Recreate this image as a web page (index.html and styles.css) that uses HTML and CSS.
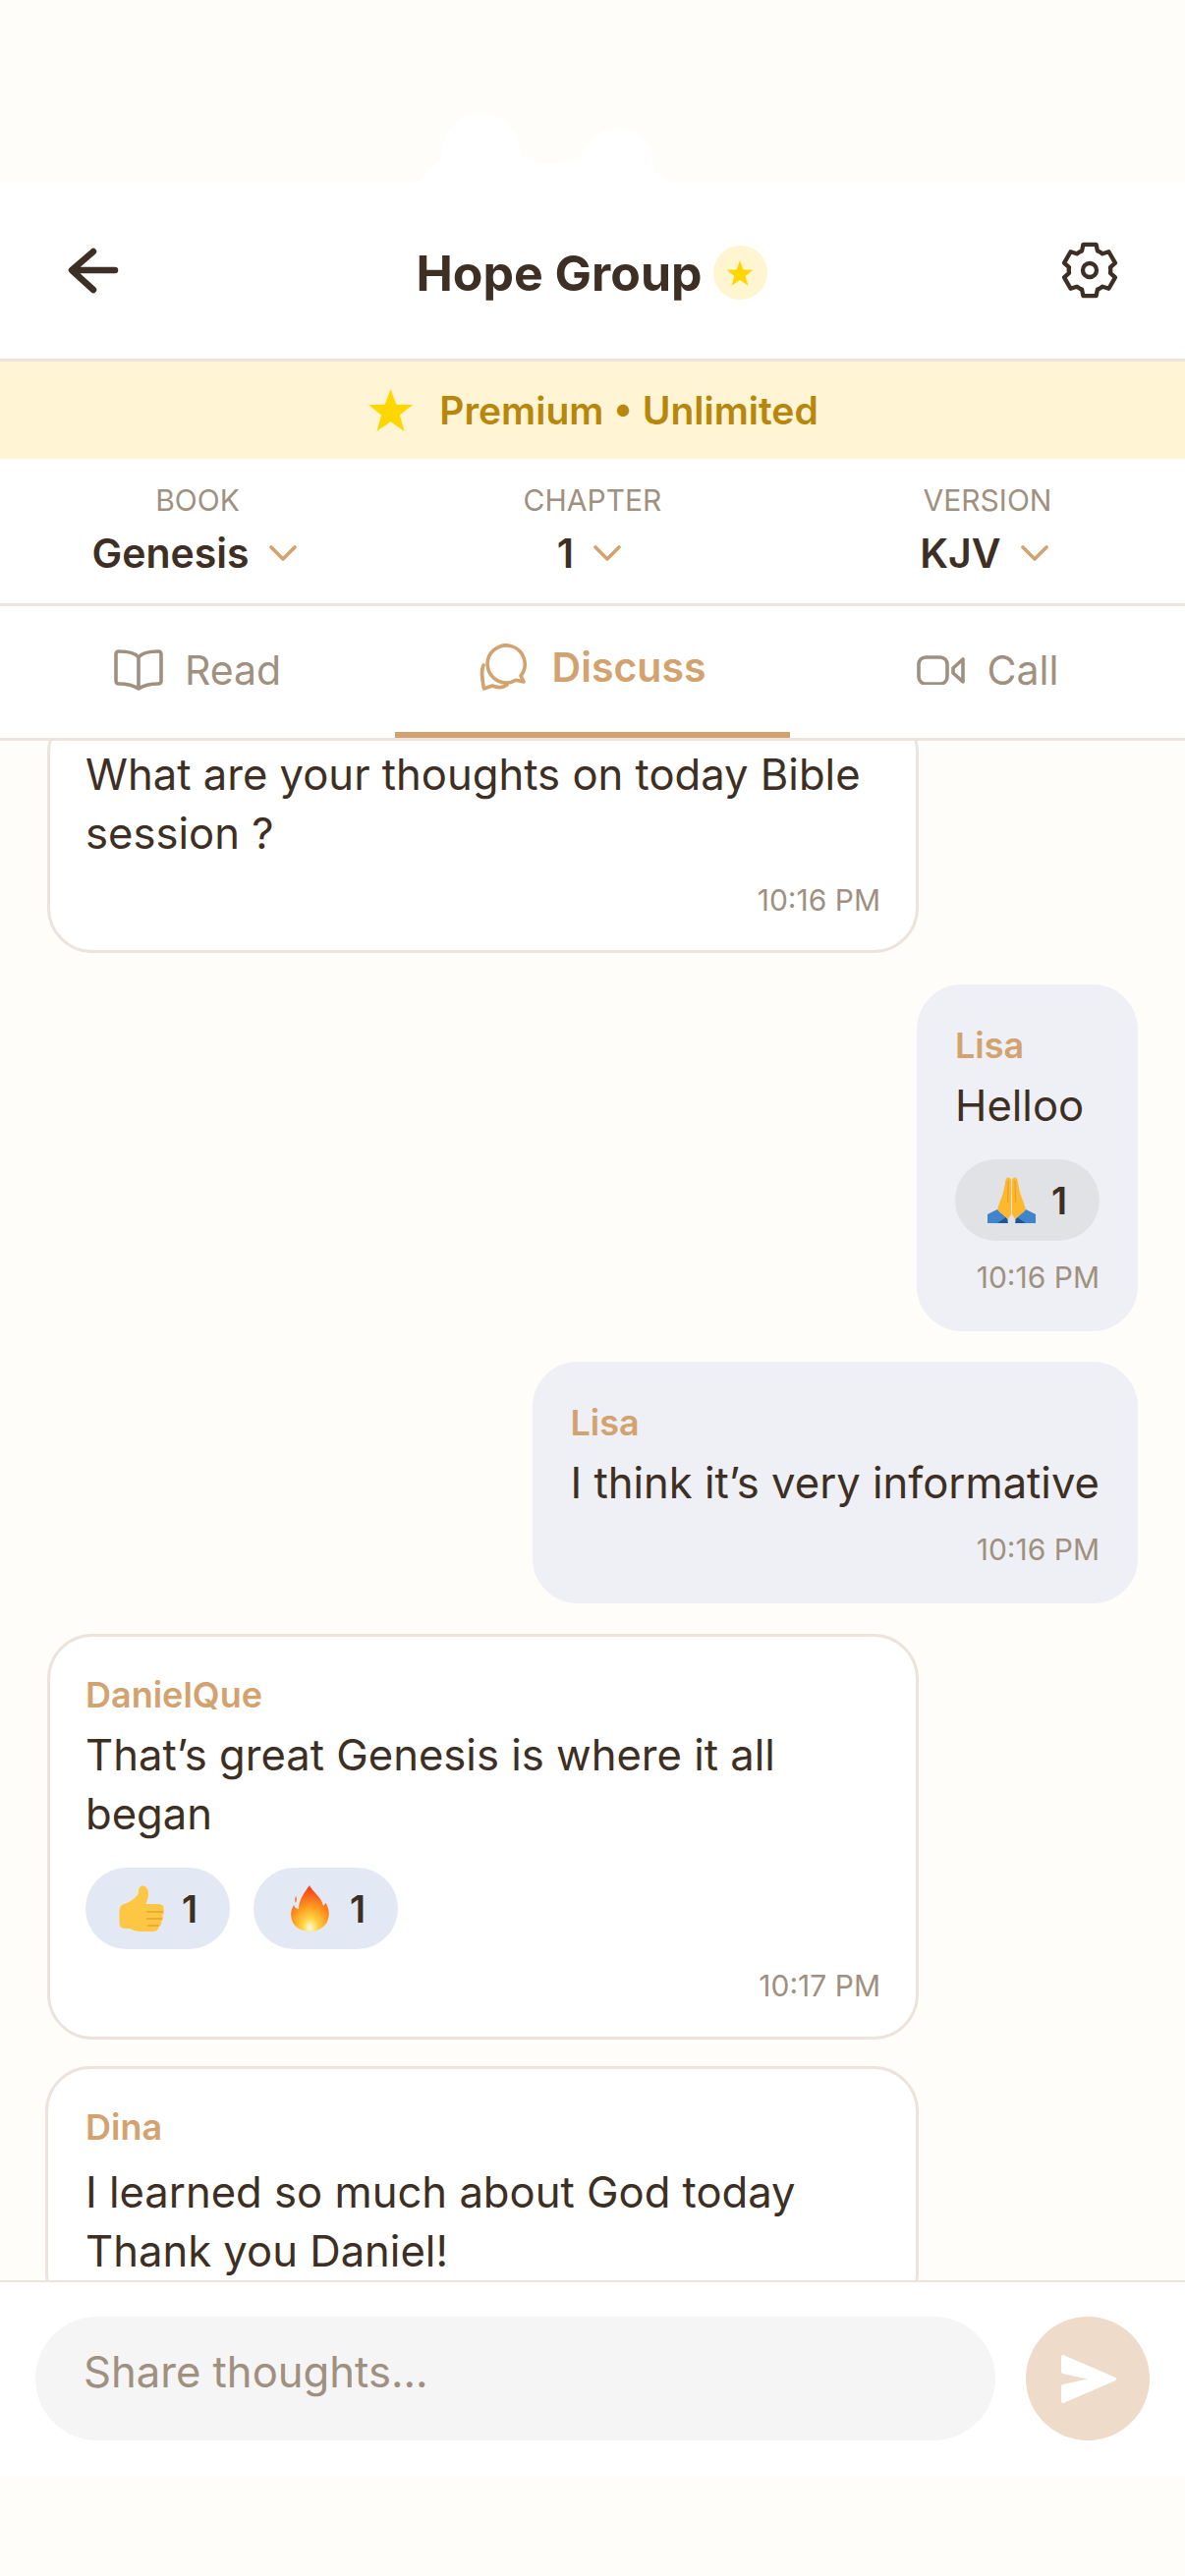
FILE: index.html
```html
<!DOCTYPE html>
<html lang="en">
<head>
    <meta charset="UTF-8">
    <meta name="viewport" content="width=device-width, initial-scale=1.0">
    <title>Hope Group</title>
    <link rel="stylesheet" href="styles.css">
</head>
<body>
<div class="app">

    <svg class="sky" viewBox="0 0 1206 186" aria-hidden="true">
        <path d="M427 186 Q440 166 450 163 C448 135 465 115 490 115 C514 115 530 135 530 158 Q540 161 548 167 Q575 166 590 161 C600 140 615 130 628 130 C652 130 666 150 665 175 Q672 178 682 186 Z" fill="#fff"/>
    </svg>

    <header class="header">
        <svg class="back-icon" viewBox="0 0 56 52">
            <path d="M27 7 L5 26 L27 46 M6 26 H49"/>
        </svg>
        <div class="title">
            <span>Hope Group</span>
            <span class="title-badge">
                <svg class="star-small" viewBox="0 0 24 24"><path d="M12 1 L15 9 L23.5 9.2 L16.8 14.5 L19.2 23 L12 18 L4.8 23 L7.2 14.5 L.5 9.2 L9 9 Z"/></svg>
            </span>
        </div>
        <svg class="gear-icon" viewBox="-31 -32 62 64">
            <path d="M-8.5 -21 L-7 -28 L7 -28 L8.5 -21 Q11.5 -20 13.94 -17.86 L20.75 -20.06 L27.75 -7.94 L22.44 -3.14 Q23 0 22.44 3.14 L27.75 7.94 L20.75 20.06 L13.94 17.86 Q11.5 20 8.5 21 L7 28 L-7 28 L-8.5 21 Q-11.5 20 -13.94 17.86 L-20.75 20.06 L-27.75 7.94 L-22.44 3.14 Q-23 0 -22.44 -3.14 L-27.75 -7.94 L-20.75 -20.06 L-13.94 -17.86 Q-11.5 -20 -8.5 -21 Z"/>
            <circle cx="0" cy="0" r="7.5"/>
        </svg>
    </header>

    <div class="premium-bar">
        <svg class="star-big" viewBox="0 0 24 24"><path d="M12 1 L15 9 L23.5 9.2 L16.8 14.5 L19.2 23 L12 18 L4.8 23 L7.2 14.5 L.5 9.2 L9 9 Z"/></svg>
        <span>Premium • Unlimited</span>
    </div>

    <div class="selectors">
        <div class="selector">
            <div class="selector-label">BOOK</div>
            <div class="selector-value">Genesis
                <svg class="chevron" viewBox="0 0 28 16"><path d="M2 2 L14 14 L26 2"/></svg>
            </div>
        </div>
        <div class="selector">
            <div class="selector-label">CHAPTER</div>
            <div class="selector-value">1
                <svg class="chevron" viewBox="0 0 28 16"><path d="M2 2 L14 14 L26 2"/></svg>
            </div>
        </div>
        <div class="selector">
            <div class="selector-label">VERSION</div>
            <div class="selector-value">KJV
                <svg class="chevron" viewBox="0 0 28 16"><path d="M2 2 L14 14 L26 2"/></svg>
            </div>
        </div>
    </div>

    <nav class="tabs">
        <div class="tab">
            <svg class="tab-icon book-icon" viewBox="0 0 50 44">
                <path d="M25 9 C22 5 14 3 5 3 Q2 3 2 6 V33 Q2 36 5 36 C12 36 19 37 25 41 C31 37 38 36 45 36 Q48 36 48 33 V6 Q48 3 45 3 C36 3 28 5 25 9 V41"/>
            </svg>
            Read
        </div>
        <div class="tab active">
            <svg class="tab-icon chat-icon" viewBox="0 0 50 50">
                <path d="M37 38.2 A19 19 0 1 1 42 33.8 L45 40 Z"/>
                <path d="M4 23 C1 30 3 38 4.5 47 L13 44 C18 46 24 46 28 43"/>
            </svg>
            Discuss
        </div>
        <div class="tab">
            <svg class="tab-icon video-icon" viewBox="0 0 50 30">
                <rect x="2" y="2" width="29" height="27" rx="7"/>
                <path d="M37 13 L47 4 V27 L37 18 Z"/>
            </svg>
            Call
        </div>
    </nav>

    <main class="messages">
        <div class="bubble other first">
            <div class="text">What are your thoughts on today Bible<br>session ?</div>
            <div class="time">10:16 PM</div>
        </div>

        <div class="bubble mine">
            <div class="sender">Lisa</div>
            <div class="text">Helloo</div>
            <div class="reactions">
                <div class="pill grey">
                    <svg class="emoji" viewBox="0 0 49 47">
                        <path d="M0 47 V38 L10 33 L21 43 L20 47 Z" fill="#3f84cc"/>
                        <path d="M49 47 V38 L39 33 L28 43 L29 47 Z" fill="#3f84cc"/>
                        <path d="M10 47 L19 41 L21 47 Z M39 47 L30 41 L28 47 Z" fill="#1f5596"/>
                        <path d="M24 3 Q23 0 20.5 0.5 Q18.5 1 18 6 L16 16 L10.5 31 Q10 35 14 37 L21 43 L24 38 Z" fill="#fdb82e"/>
                        <path d="M25 3 Q26 0 28.5 0.5 Q30.5 1 31 6 L33 16 L38.5 31 Q39 35 35 37 L28 43 L25 38 Z" fill="#fdb82e"/>
                        <path d="M21 4 L20.5 26 M28 4 L28.5 26" stroke="#f09f1e" stroke-width="1.2" fill="none"/>
                    </svg>
                    <span>1</span>
                </div>
            </div>
            <div class="time">10:16 PM</div>
        </div>

        <div class="bubble mine">
            <div class="sender">Lisa</div>
            <div class="text">I think it’s very informative</div>
            <div class="time">10:16 PM</div>
        </div>

        <div class="bubble other">
            <div class="sender">DanielQue</div>
            <div class="text">That’s great Genesis is where it all<br>began</div>
            <div class="reactions">
                <div class="pill">
                    <svg class="emoji" viewBox="0 0 46 47">
                        <path d="M0 26 Q0 20 5 19 Q14 16 19 9 L20 3 Q22 -1 26 1 Q31 4 29 13 L27 19 L40 19 Q46 20 45 24 Q46 28 44 30 Q45 34 43 36 Q43 41 40 42 Q40 47 34 47 L20 47 Q15 47 11 44 L6 44 Q0 44 0 38 Z" fill="#fdc743"/>
                        <path d="M28 27 H44 M28 34 H43 M29 41 H40" stroke="#e8a32a" stroke-width="1.6" fill="none" stroke-linecap="round"/>
                    </svg>
                    <span>1</span>
                </div>
                <div class="pill">
                    <svg class="emoji" viewBox="0 0 39 47">
                        <defs>
                            <radialGradient id="flame" cx="50%" cy="92%" r="85%">
                                <stop offset="0" stop-color="#fffbe0"/>
                                <stop offset=".22" stop-color="#ffd84a"/>
                                <stop offset=".55" stop-color="#ff9a1f"/>
                                <stop offset="1" stop-color="#f5431c"/>
                            </radialGradient>
                        </defs>
                        <path d="M19 0 C22 7 31 11 33 21 L35.5 18 C39 24 40 30 37 37 C34 43 27 47 20 47 C11 47 3 43 1 35 C-1 28 1 24 3 20 C4 23 6 24 8 24 C8 14 15 6 19 0 Z" fill="url(#flame)"/>
                        <path d="M5 11 Q7 13 5 18 Q3 15 5 11 Z" fill="#ff7a3a"/>
                    </svg>
                    <span>1</span>
                </div>
            </div>
            <div class="time">10:17 PM</div>
        </div>

        <div class="bubble other dina">
            <div class="sender">Dina</div>
            <div class="text">I learned so much about God today<br>Thank you Daniel!</div>
        </div>
    </main>

    <div class="composer">
        <input class="composer-input" type="text" placeholder="Share thoughts...">
        <button class="send-btn" aria-label="Send">
            <svg class="send-icon" viewBox="0 0 56 49">
                <path d="M2 2 L54 24.5 L2 47 V32 L36 24.5 L2 17 Z"/>
            </svg>
        </button>
    </div>

    <div class="home-area"></div>
</div>
</body>
</html>
```

FILE: styles.css
```css
* {
    box-sizing: border-box;
    margin: 0;
    padding: 0;
    font-family: 'Inter', sans-serif;
}
body {
    background-color: #fffdf9;
    color: #3d2f24;
}
.app {
    width: 1206px;
    height: 2622px;
    display: flex;
    flex-direction: column;
    overflow: hidden;
}
.sky {
    display: block;
    width: 1206px;
    height: 186px;
    flex: none;
}

/* header */
.header {
    flex: none;
    height: 182px;
    padding: 0 68px 2px 68px;
    background-color: #fff;
    border-bottom: 3px solid #ece3dc;
    display: flex;
    justify-content: space-between;
    align-items: center;
}
.back-icon {
    width: 56px;
    height: 52px;
    fill: none;
    stroke: #3d2f24;
    stroke-width: 6.5;
    stroke-linecap: round;
    stroke-linejoin: round;
}
.gear-icon {
    width: 58px;
    height: 60px;
    fill: none;
    stroke: #3d2f24;
    stroke-width: 4.6;
    stroke-linejoin: round;
}
.title {
    display: flex;
    align-items: center;
    gap: 11px;
    margin-top: 6px;
    font-family: 'Lato', sans-serif;
    font-size: 50px;
    font-weight: 700;
}
.title-badge {
    width: 55px;
    height: 55px;
    border-radius: 50%;
    background-color: #fff5d1;
    display: flex;
    justify-content: center;
    align-items: center;
}
.star-small {
    width: 28px;
    height: 28px;
    fill: #ffd700;
}

/* premium */
.premium-bar {
    flex: none;
    height: 99px;
    background-color: #fff5d4;
    display: flex;
    justify-content: center;
    align-items: center;
    gap: 25px;
    color: #b8860b;
    font-size: 39px;
    font-weight: 600;
}
.star-big {
    width: 49px;
    height: 47px;
    fill: #ffd700;
}

/* selectors */
.selectors {
    flex: none;
    height: 150px;
    padding-top: 25px;
    background-color: #fff;
    border-bottom: 3px solid #ece3dc;
    display: grid;
    grid-template-columns: 1fr 1fr 1fr;
    text-align: center;
}
.selector-label {
    color: #a09080;
    font-size: 30px;
    line-height: 34px;
}
.selector-value {
    margin-top: 11px;
    padding-right: 7px;
    display: flex;
    justify-content: center;
    align-items: center;
    gap: 20px;
    font-size: 41px;
    font-weight: 600;
    line-height: 52px;
}
.chevron {
    width: 28px;
    height: 16px;
    fill: none;
    stroke: #d2a26f;
    stroke-width: 3.6;
    stroke-linecap: round;
    stroke-linejoin: round;
}

/* tabs */
.tabs {
    flex: none;
    height: 137px;
    background-color: #fff;
    border-bottom: 3px solid #ece3dc;
    display: grid;
    grid-template-columns: 1fr 1fr 1fr;
}
.tab {
    height: 134px;
    padding-bottom: 4px;
    display: flex;
    justify-content: center;
    align-items: center;
    gap: 22px;
    color: #a09080;
    font-size: 41px;
}
.tab.active {
    gap: 24px;
    color: #d2a26f;
    font-weight: 600;
    padding-bottom: 4px;
    border-bottom: 6px solid #d2a26f;
}
.tab-icon {
    fill: none;
    stroke: currentColor;
    stroke-linecap: round;
    stroke-linejoin: round;
}
.book-icon {
    width: 50px;
    height: 44px;
    stroke-width: 3.6;
}
.chat-icon {
    width: 50px;
    height: 50px;
    stroke-width: 3.6;
}
.video-icon {
    width: 50px;
    height: 30px;
    stroke-width: 3.6;
}

/* messages */
.messages {
    flex: none;
    height: 1567px;
    padding: 0 48px;
    display: flex;
    flex-direction: column;
    align-items: flex-start;
    gap: 31px;
    overflow: hidden;
}
.bubble {
    flex: none;
    padding: 36px 36px 34px 36px;
    border: 3px solid transparent;
    border-radius: 46px;
}
.bubble.other {
    width: 887px;
    background-color: #fff;
    border-color: #ece3dc;
}
.bubble.mine {
    align-self: flex-end;
    background-color: #eef0f5;
    border-color: #eef0f5;
}
/* scrolled under the tabs */
.bubble.first {
    margin-top: -34px;
    margin-bottom: 1px;
    padding-bottom: 33px;
}
.bubble.dina {
    width: 889px;
    margin-top: -4px;
    margin-left: -2px;
    padding-left: 38px;
}
.sender {
    color: #d2a26f;
    font-size: 36px;
    font-weight: 600;
    line-height: 46px;
    margin-bottom: 9px;
}
.bubble.dina .sender {
    margin-bottom: 14px;
}
.text {
    font-size: 43.6px;
    line-height: 60px;
}
.reactions {
    display: flex;
    gap: 24px;
    margin-top: 24px;
}
.pill {
    width: 147px;
    height: 83px;
    border-radius: 42px;
    background-color: #e3e9f4;
    display: flex;
    justify-content: center;
    align-items: center;
    gap: 16px;
    font-size: 38px;
    font-weight: 600;
}
.pill.grey {
    background-color: #e0e2e6;
}
.emoji {
    height: 47px;
    width: 49px;
}
.time {
    margin-top: 19px;
    color: #a09080;
    font-size: 30px;
    line-height: 36px;
    text-align: right;
}

/* composer */
.composer {
    flex: none;
    height: 199px;
    padding: 35px 36px 0 36px;
    background-color: #fff;
    border-top: 2px solid #ece3dc;
    display: flex;
    align-items: flex-start;
    gap: 31px;
}
.composer-input {
    flex: 1;
    height: 126px;
    padding: 0 49px 14px 49px;
    border: none;
    border-radius: 63px;
    background-color: #f5f5f5;
    font-size: 43.6px;
    color: #3d2f24;
}
.composer-input::placeholder {
    color: #a09080;
    opacity: 1;
}
.send-btn {
    width: 126px;
    height: 126px;
    border: none;
    border-radius: 50%;
    background-color: #eedbc9;
    display: flex;
    justify-content: center;
    align-items: center;
}
.send-icon {
    width: 56px;
    height: 49px;
    margin-left: 2px;
    fill: #fff;
    stroke: #fff;
    stroke-width: 4;
    stroke-linejoin: round;
}
.home-area {
    flex: 1;
}
```
